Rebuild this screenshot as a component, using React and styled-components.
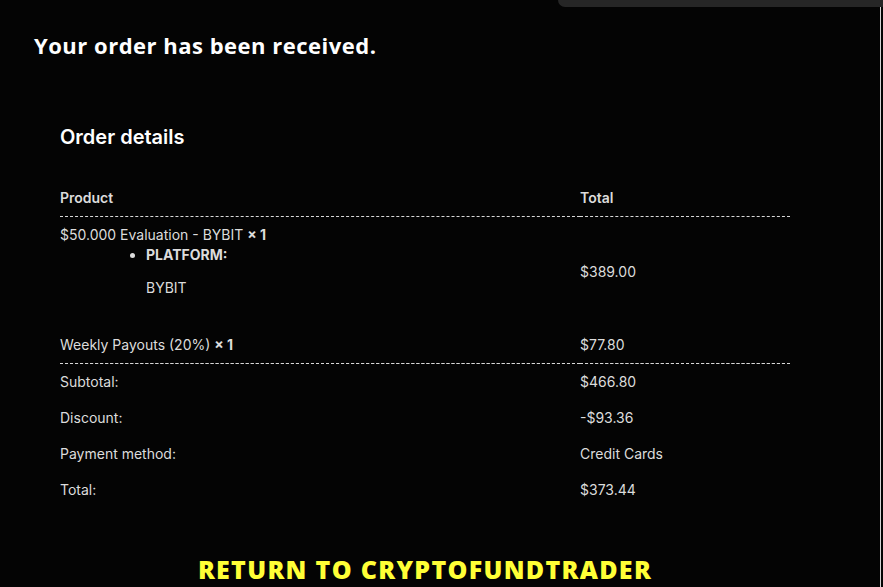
import styled, { createGlobalStyle } from "styled-components";

const GlobalStyle = createGlobalStyle`
  html, body {
    margin: 0;
    padding: 0;
    background: #040404;
  }
  * {
    box-sizing: border-box;
  }
`;

const Page = styled.div`
  position: relative;
  min-height: 100vh;
  padding: 31px 0 0 34px;
  overflow: hidden;
  font-family: "Inter", "Liberation Sans", sans-serif;
  color: #dcdcdc;
`;

// grey strip at the top right corner (browser chrome overlay)
const TopStrip = styled.div`
  position: absolute;
  top: 0;
  right: 0;
  width: 325px;
  height: 7px;
  background: #262626;
  border-bottom-left-radius: 12px;
`;

const EdgeLine = styled.div`
  position: absolute;
  top: 7px;
  bottom: 0;
  right: 2px;
  width: 1px;
  background: #d4d4d4;
`;

const Title = styled.h1`
  margin: 0;
  font-family: "Open Sans", "Liberation Sans", sans-serif;
  font-weight: 700;
  font-size: 22px;
  letter-spacing: 0.5px;
  line-height: 28px;
  color: #ffffff;
`;

const Details = styled.section`
  width: 756px;
  padding: 64px 0 0 26px;
`;

const DetailsTitle = styled.h2`
  margin: 0 0 28px;
  font-weight: 600;
  font-size: 20px;
  line-height: 28px;
  color: #ffffff;
`;

const Table = styled.table`
  width: 730px;
  border-collapse: collapse;
  font-size: 14px;
  line-height: 20px;
  text-align: left;

  th {
    font-weight: 600;
    padding: 9px 0 8px;
    border-bottom: 1px dashed #d8d8d8;
  }
  tbody td {
    padding: 8px 0 8px;
    vertical-align: middle;
  }
  tfoot td {
    padding: 8px 0 8px;
  }
  .first {
    width: 520px;
  }
`;

const ItemRow = styled.tr`
  td {
    border-bottom: ${(p) => (p.$last ? "1px dashed #d8d8d8" : "none")};
  }
`;

const Qty = styled.strong`
  font-weight: 700;
`;

const Meta = styled.ul`
  margin: 0;
  padding-left: 86px;
  list-style: disc;

  strong {
    font-weight: 700;
  }
  p {
    margin: 13px 0 21px;
  }
`;

const ReturnWrap = styled.div`
  width: 782px;
  padding-top: 46px;
  text-align: center;
`;

const ReturnLink = styled.a`
  font-family: "Open Sans", "Liberation Sans", sans-serif;
  font-weight: 800;
  font-size: 25px;
  letter-spacing: 1.3px;
  line-height: 30px;
  color: #ffff36;
  text-decoration: none;
  text-transform: uppercase;
`;

const items = [
  { name: "$50.000 Evaluation - BYBIT", qty: 1, total: "$389.00", meta: { key: "PLATFORM:", value: "BYBIT" } },
  { name: "Weekly Payouts (20%)", qty: 1, total: "$77.80" },
];

const totals = [
  ["Subtotal:", "$466.80"],
  ["Discount:", "-$93.36"],
  ["Payment method:", "Credit Cards"],
  ["Total:", "$373.44"],
];

export default function App() {
  return (
    <>
      <GlobalStyle />
      <Page>
        <TopStrip />
        <EdgeLine />
        <Title>Your order has been received.</Title>

        <Details>
          <DetailsTitle>Order details</DetailsTitle>
          <Table>
            <thead>
              <tr>
                <th className="first">Product</th>
                <th>Total</th>
              </tr>
            </thead>
            <tbody>
              {items.map((item, key) => (
                <ItemRow key={key} $last={key === items.length - 1}>
                  <td className="first">
                    {item.name} <Qty>× {item.qty}</Qty>
                    {item.meta && (
                      <Meta>
                        <li>
                          <strong>{item.meta.key}</strong>
                          <p>{item.meta.value}</p>
                        </li>
                      </Meta>
                    )}
                  </td>
                  <td>{item.total}</td>
                </ItemRow>
              ))}
            </tbody>
            <tfoot>
              {totals.map(([label, value]) => (
                <tr key={label}>
                  <td className="first">{label}</td>
                  <td>{value}</td>
                </tr>
              ))}
            </tfoot>
          </Table>
        </Details>

        <ReturnWrap>
          <ReturnLink href="#">Return to CryptoFundTrader</ReturnLink>
        </ReturnWrap>
      </Page>
    </>
  );
}
